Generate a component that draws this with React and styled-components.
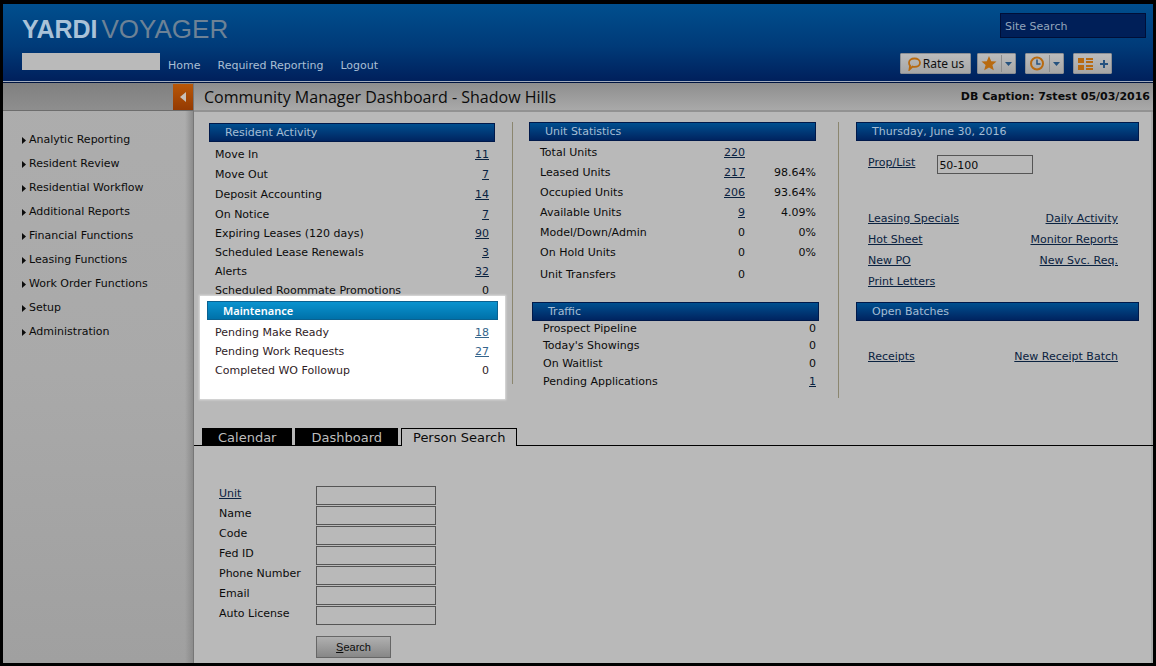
import React from 'react';
import styled, { createGlobalStyle } from 'styled-components';

const sans = '"DejaVu Sans", Verdana, sans-serif';
const ink = '#0b0b0b';
const linkInk = '#0a2240';

const Global = createGlobalStyle`
  *, *::before, *::after { box-sizing: border-box; }
  body { margin: 0; background: #000; font: 11px/16px ${sans}; color: ${ink}; }
  button, input { font: inherit; color: inherit; border-radius: 0; margin: 0; }
  h1, h2, ul { margin: 0; padding: 0; list-style: none; font-weight: normal; }
  a { color: ${linkInk}; }
`;

const Page = styled.div`
  display: flex;
  flex-direction: column;
  min-height: 100vh;
  border: 3px solid #000;
  border-top-width: 4px;
`;

const Header = styled.header`
  display: flex;
  flex-direction: column;
  justify-content: space-between;
  height: 79px;
  padding: 9px 7px 8px 19px;
  border-bottom: 1px solid #001440;
  box-shadow: inset 0 -1px #a3adbd;
  background: linear-gradient(#004f8e, #003a78 55%, #001f5b);
  color: #a9bfd4;
`;

const HeaderRow = styled.div`
  display: flex;
  justify-content: space-between;
  align-items: flex-start;
`;

const Logo = styled.div`
  display: flex;
  gap: 4px;
  padding-top: 4px;
  font: 26px/24px "Liberation Sans", Arial, sans-serif;
  color: #6d8296;
`;

const LogoStrong = styled.strong`
  font-size: 25px;
  font-weight: 700;
  color: #a9c2d8;
`;

const SiteSearch = styled.input`
  width: 146px;
  height: 25px;
  padding: 1px 4px 0;
  border: 1px solid #000f38;
  background: #001f58;
  &::placeholder { color: #93a5bb; opacity: 1; }
`;

const TopNav = styled.nav`
  display: flex;
  align-items: flex-start;
`;

const UserBox = styled.input`
  width: 138px;
  height: 17px;
  margin-right: 8px;
  border: 0;
  background: #bababa;
`;

const TopLink = styled.a`
  padding-top: 5px;
  margin-right: 17px;
  color: #a9bfd4;
  text-decoration: none;
`;

const Tools = styled.div`
  display: flex;
  gap: 9px;
  padding-right: 34px;
`;

const ToolButton = styled.button`
  display: flex;
  align-items: center;
  justify-content: center;
  gap: 2px;
  width: ${(p) => (p.$wide ? 71 : 39)}px;
  height: 21px;
  margin-right: ${(p) => (p.$wide ? -3 : 0)}px;
  padding: 0;
  border: 1px solid #8c8f94;
  border-radius: 1px;
  background: linear-gradient(#bcbcbc, #a6a6a6);
  color: #101010;
  font: 12px/16px "Noto Sans", sans-serif;
`;

const Body = styled.div`
  flex: 1;
  display: grid;
  grid-template-columns: 191px minmax(0, 1fr);
`;

const Side = styled.aside`
  background: linear-gradient(90deg, transparent 182px, #8b8b8b), linear-gradient(#adadad, #a9a9a9 50%, #a0a0a0);
  border-right: 1px solid #777;
`;

const SideTop = styled.div`
  display: flex;
  justify-content: flex-end;
  height: 28px;
  padding-top: 1px;
  border-bottom: 1px solid #6d6d6d;
  background: linear-gradient(#808080, #8e8e8e);
`;

const Collapse = styled.button`
  display: flex;
  align-items: center;
  justify-content: center;
  width: 20px;
  height: 26px;
  padding: 0;
  border: 0;
  background: linear-gradient(#b95707, #943a02);
`;

const SideNav = styled.ul`
  padding: 17px 0 0 19px;
`;

const SideItem = styled.li`
  display: flex;
  align-items: center;
  gap: 3px;
  height: 24px;
`;

const SideLink = styled.a`
  color: ${ink};
  text-decoration: none;
`;

const Main = styled.main`
  background: #b9b9b9;
  box-shadow: inset -2px 0 #a8a8a8;
`;

const TitleBar = styled.div`
  display: flex;
  justify-content: space-between;
  align-items: center;
  height: 29px;
  padding: 0 3px 0 10px;
  border-bottom: 2px solid #929292;
  background: linear-gradient(#8e8e8e, #a9a9a9);
`;

const Title = styled.h1`
  font: 16px/24px "Open Sans", "Noto Sans", sans-serif;
`;

const Caption = styled.strong`
  font-size: 11px;
`;

const Board = styled.div`
  display: grid;
  grid-template-columns: 319fr 326fr 314fr;
  align-items: start;
  min-height: 316px;
`;

const Column = styled.section`
  margin-top: 10px;
  min-height: ${(p) => p.$min}px;
  padding: ${(p) => p.$pad};
  border-right: ${(p) => (p.$rule ? '1px solid #8b866f' : '0')};
`;

const PanelTitle = styled.h2`
  height: 19px;
  padding-left: 15px;
  border: 1px solid ${(p) => (p.$bright ? '#0a6190' : '#00194a')};
  background: ${(p) => (p.$bright ? 'linear-gradient(#0a93cf, #0071a9)' : 'linear-gradient(#004f8f, #002460)')};
  color: ${(p) => (p.$bright ? '#fff' : '#a5bdd4')};
  font: ${(p) => (p.$bright ? '600 11px/18px "Noto Sans", sans-serif' : `11px/18px ${sans}`)};
`;

const Data = styled.table`
  width: 100%;
  border-collapse: collapse;
`;

const Row = styled.tr`
  height: ${(p) => p.$h}px;
`;

const Label = styled.th`
  padding: 0 0 0 ${(p) => p.$inset || 0}px;
  font-weight: normal;
  line-height: 14px;
  text-align: left;
`;

const Num = styled.td`
  width: ${(p) => p.$w || 60}px;
  padding: 0 ${(p) => p.$end || 0}px 0 0;
  line-height: 14px;
  text-align: right;
`;

const Spotlight = styled.div`
  position: relative;
  margin: -4px 7px -16px -4px;
  min-height: 103px;
  padding: 5px 7px 0;
  background: #fff;
  box-shadow: 0 0 2px 1px #dedede;
  color: #301c26;
  a { color: #35658c; }
`;

const Inset = styled.div`
  padding: ${(p) => p.$pad};
`;

const PropRow = styled.div`
  display: flex;
  gap: 22px;
  padding: 14px 0 0 12px;
`;

const PropInput = styled.input`
  width: 96px;
  height: 19px;
  padding: 2px 1px 0;
  border: 1px solid #555;
  background: transparent;
`;

const LinkGrid = styled.div`
  display: flex;
  justify-content: space-between;
  padding: ${(p) => p.$top}px 21px 0 12px;
`;

const LinkList = styled.ul`
  text-align: ${(p) => (p.$right ? 'right' : 'left')};
  line-height: 21px;
`;

const Tabs = styled.div`
  display: flex;
  gap: 3px;
  height: 18px;
  padding-left: 8px;
  box-shadow: inset 0 -1px #000;
`;

const Tab = styled.button`
  padding: 0 ${(p) => (p.$active ? 11 : 16)}px;
  border: ${(p) => (p.$active ? '1px solid #000' : '0')};
  border-bottom: 0;
  background: ${(p) => (p.$active ? '#b9b9b9' : '#000')};
  color: ${(p) => (p.$active ? ink : '#bdbdbd')};
  font-size: 13px;
  line-height: 17px;
`;

const Form = styled.form`
  padding: 40px 0 5px 25px;
`;

const Field = styled.div`
  display: grid;
  grid-template-columns: 97px 120px;
  height: 20px;
`;

const FieldInput = styled.input`
  height: 19px;
  border: 1px solid #555;
  background: transparent;
`;

const Submit = styled.button`
  width: 75px;
  height: 22px;
  margin: 10px 0 0 97px;
  padding: 0;
  border: 1px solid #666;
  background: linear-gradient(#b0b0b0, #878787);
  font: 11px/16px "Liberation Sans", Arial, sans-serif;
`;

const orange = '#b86a10';

const Divided = ({ children, plus }) => (
  <svg width="37" height="19" aria-hidden="true">
    {children}
    {!plus && <path d="M23.5 1v17" stroke="#8d8d8d" />}
    {plus ? <path d="M30 6v8M26 10h8" stroke="#26527f" strokeWidth="2" /> : <path d="M27 8h7l-3.500 4z" fill="#26527f" />}
  </svg>
);

const activity = [
  ['Move In', '11', 20], ['Move Out', '7', 20], ['Deposit Accounting', '14', 20], ['On Notice', '7', 19],
  ['Expiring Leases (120 days)', '90', 19], ['Scheduled Lease Renewals', '3', 19], ['Alerts', '32', 19],
  ['Scheduled Roommate Promotions', '0', 19],
];
const maintenance = [['Pending Make Ready', '18', 19], ['Pending Work Requests', '27', 19], ['Completed WO Followup', '0', 19]];
const units = [
  ['Total Units', '220', 20, ''], ['Leased Units', '217', 20, '98.64%'], ['Occupied Units', '206', 20, '93.64%'],
  ['Available Units', '9', 20, '4.09%'], ['Model/Down/Admin', '0', 20, '0%'], ['On Hold Units', '0', 20, '0%'],
  ['Unit Transfers', '0', 24, ''],
];
const traffic = [['Prospect Pipeline', '0', 16], ["Today's Showings", '0', 18], ['On Waitlist', '0', 18], ['Pending Applications', '1', 18]];
const menu = ['Analytic Reporting', 'Resident Review', 'Residential Workflow', 'Additional Reports', 'Financial Functions',
  'Leasing Functions', 'Work Order Functions', 'Setup', 'Administration'];
const fields = ['Unit', 'Name', 'Code', 'Fed ID', 'Phone Number', 'Email', 'Auto License'];

const DataTable = ({ rows, inset, end }) => (
  <Data>
    <tbody>
      {rows.map(([label, value, h, pct]) => (
        <Row key={label} $h={h}>
          <Label scope="row" $inset={inset}>{label}</Label>
          <Num $end={end}>{value === '0' ? value : <a href="#detail">{value}</a>}</Num>
          {pct !== undefined && <Num $w={71}>{pct}</Num>}
        </Row>
      ))}
    </tbody>
  </Data>
);

const Links = ({ items, right }) => (
  <LinkList $right={right}>
    {items.map((t) => <li key={t}><a href="#open">{t}</a></li>)}
  </LinkList>
);

export default function App() {
  return (
    <Page>
      <Global />
      <Header>
        <HeaderRow>
          <Logo><LogoStrong>YARDI</LogoStrong><span>VOYAGER</span></Logo>
          <SiteSearch placeholder="Site Search" aria-label="Site Search" />
        </HeaderRow>
        <HeaderRow>
          <TopNav>
            <UserBox aria-label="User" />
            {['Home', 'Required Reporting', 'Logout'].map((t) => <TopLink key={t} href="#nav">{t}</TopLink>)}
          </TopNav>
          <Tools>
            <ToolButton $wide>
              <svg width="14" height="14" aria-hidden="true">
                <path d="M7.500 1.500c3.300 0 5.500 1.800 5.500 4.200s-2.200 4.200-5.500 4.200c-.8 0-1.500-.1-2-.3L2.500 12.500l.6-3.900C2.300 7.900 2 6.900 2 5.700c0-2.400 2.200-4.200 5.500-4.200z" fill="none" stroke={orange} strokeWidth="1.800" />
              </svg>
              Rate us
            </ToolButton>
            <ToolButton aria-label="Favorites">
              <Divided><path d="M11 2l2.200 5.200 5.300.3-4.100 3.500 1.400 5.300L11 13.400l-4.800 2.900 1.400-5.300-4.100-3.500 5.300-.3z" fill={orange} /></Divided>
            </ToolButton>
            <ToolButton aria-label="History">
              <Divided>
                <circle cx="11" cy="9.500" r="6" fill="none" stroke={orange} strokeWidth="2" />
                <path d="M11 5.500v4.500h3.500" fill="none" stroke="#26527f" strokeWidth="1.500" />
              </Divided>
            </ToolButton>
            <ToolButton aria-label="Add to dashboard">
              <Divided plus>
                <path d="M4 4h6v5H4zM4 11h6v5H4zM12 4h7v2h-7zM12 7h7v2h-7zM12 11h7v2h-7zM12 14h7v2h-7z" fill={orange} />
              </Divided>
            </ToolButton>
          </Tools>
        </HeaderRow>
      </Header>
      <Body>
        <Side>
          <SideTop>
            <Collapse aria-label="Collapse menu">
              <svg width="6" height="10" aria-hidden="true"><path d="M6 0v10L0 5z" fill="#c8c0b8" /></svg>
            </Collapse>
          </SideTop>
          <SideNav>
            {menu.map((t) => (
              <SideItem key={t}>
                <svg width="4" height="7" aria-hidden="true"><path d="M0 0v7l4-3.500z" fill={ink} /></svg>
                <SideLink href="#menu">{t}</SideLink>
              </SideItem>
            ))}
          </SideNav>
        </Side>
        <Main>
          <TitleBar>
            <Title>Community Manager Dashboard - Shadow Hills</Title>
            <Caption>DB Caption: 7stest 05/03/2016</Caption>
          </TitleBar>
          <Board>
            <Column $min={262} $pad="1px 0 0 10px" $rule>
              <Inset $pad="0 17px 3px 5px"><PanelTitle>Resident Activity</PanelTitle></Inset>
              <Inset $pad="0 23px 0 11px"><DataTable rows={activity} /></Inset>
              <Spotlight>
                <PanelTitle $bright>Maintenance</PanelTitle>
                <Inset $pad="3px 9px 0 8px"><DataTable rows={maintenance} /></Inset>
              </Spotlight>
            </Column>
            <Column $min={276} $pad="0 19px 0 16px" $rule>
              <Inset $pad="0 3px 15px 0">
                <PanelTitle>Unit Statistics</PanelTitle>
                <Inset $pad="2px 0 0"><DataTable rows={units} inset={11} /></Inset>
              </Inset>
              <Inset $pad="0 0 0 3px">
                <PanelTitle>Traffic</PanelTitle>
                <DataTable rows={traffic} inset={11} end={3} />
              </Inset>
            </Column>
            <Column $min={276} $pad="0 14px 0 17px">
              <PanelTitle>Thursday, June 30, 2016</PanelTitle>
              <PropRow>
                <a href="#prop" id="prop">Prop/List</a>
                <PropInput aria-labelledby="prop" defaultValue="50-100" />
              </PropRow>
              <LinkGrid $top={34}>
                <Links items={['Leasing Specials', 'Hot Sheet', 'New PO', 'Print Letters']} />
                <Links right items={['Daily Activity', 'Monitor Reports', 'New Svc. Req.']} />
              </LinkGrid>
              <Inset $pad="10px 0 0"><PanelTitle>Open Batches</PanelTitle></Inset>
              <LinkGrid $top={25}>
                <Links items={['Receipts']} />
                <Links right items={['New Receipt Batch']} />
              </LinkGrid>
            </Column>
          </Board>
          <Tabs role="tablist">
            <Tab role="tab">Calendar</Tab>
            <Tab role="tab">Dashboard</Tab>
            <Tab role="tab" aria-selected="true" $active>Person Search</Tab>
          </Tabs>
          <Form>
            {fields.map((f) => (
              <Field key={f}>
                <label htmlFor={f}>{f === 'Unit' ? <a href="#unit">{f}</a> : f}</label>
                <FieldInput id={f} />
              </Field>
            ))}
            <Submit type="button"><u>S</u>earch</Submit>
          </Form>
        </Main>
      </Body>
    </Page>
  );
}
